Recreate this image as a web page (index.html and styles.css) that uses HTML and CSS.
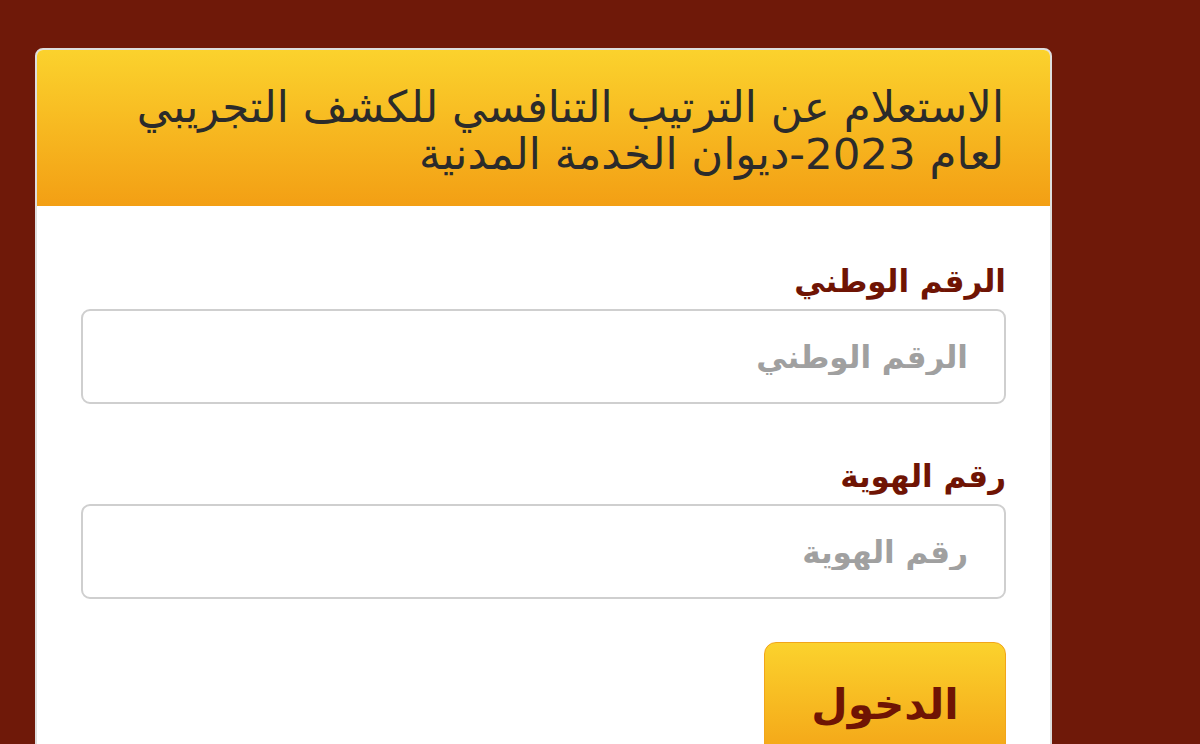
FILE: index.html
```html
<!DOCTYPE html>
<html lang="ar" dir="rtl">
<head>
<meta charset="utf-8">
<link rel="stylesheet" href="styles.css">
</head>
<body>
<div class="page">
  <div class="panel">
    <div class="panel-heading">
      <h3 class="panel-title">الاستعلام عن الترتيب التنافسي للكشف التجريبي لعام 2023-ديوان الخدمة المدنية</h3>
    </div>
    <div class="panel-body">
      <form class="form">
        <div class="form-group">
          <label class="label" for="nid">الرقم الوطني</label>
          <input class="input" id="nid" type="text" placeholder="الرقم الوطني">
        </div>
        <div class="form-group">
          <label class="label" for="idn">رقم الهوية</label>
          <input class="input" id="idn" type="text" placeholder="رقم الهوية">
        </div>
        <div class="actions">
          <button class="btn" type="button">الدخول</button>
        </div>
      </form>
    </div>
  </div>
</div>
</body>
</html>
```

FILE: styles.css
```css
html, body {
  margin: 0;
  padding: 0;
  height: 100%;
  overflow: hidden;
}
body {
  background: #6f1909;
  font-family: "DejaVu Sans", "Noto Sans", sans-serif;
}
.page {
  direction: ltr;
  padding: 48px 0 0 35px;
}
.panel {
  direction: rtl;
  width: 1017px;
  box-sizing: border-box;
  background: #ffffff;
  border: 2px solid #dedede;
  border-radius: 8px;
  overflow: hidden;
}
.panel-heading {
  background: linear-gradient(to bottom, #fbd22d 0%, #f39f14 100%);
  height: 156px;
  box-sizing: border-box;
  padding: 34px 46px 0 46px;
}
.panel-title {
  margin: 0;
  font-weight: normal;
  font-size: 43.5px;
  line-height: 47px;
  color: #2b2b2b;
  text-align: right;
}
.panel-body {
  padding: 54px 44px 0 44px;
}
.form-group {
  display: flex;
  flex-direction: column;
  align-items: stretch;
  margin-bottom: 51px;
}
.label {
  display: block;
  font-weight: bold;
  font-size: 31px;
  line-height: 42px;
  color: #6f1404;
  margin-bottom: 7px;
}
.input {
  box-sizing: border-box;
  height: 95px;
  width: 100%;
  border: 2px solid #cfcfcf;
  border-radius: 9px;
  padding: 0 36px;
  font-family: "DejaVu Sans", sans-serif;
  font-weight: bold;
  font-size: 31px;
  color: #333;
  background: #fff;
  direction: rtl;
  text-align: right;
  outline: none;
}
.input::placeholder {
  color: #a0a0a0;
}
.actions {
  display: flex;
  justify-content: flex-start;
  margin-top: -8px;
}
.btn {
  width: 242px;
  height: 130px;
  border: 1px solid #f2a51a;
  border-radius: 12px;
  background: linear-gradient(to bottom, #fbd22d 0%, #f39f14 100%);
  color: #6f1404;
  font-family: "DejaVu Sans", sans-serif;
  font-weight: bold;
  font-size: 42px;
  padding: 0 0 6px 0;
  cursor: pointer;
}
```
